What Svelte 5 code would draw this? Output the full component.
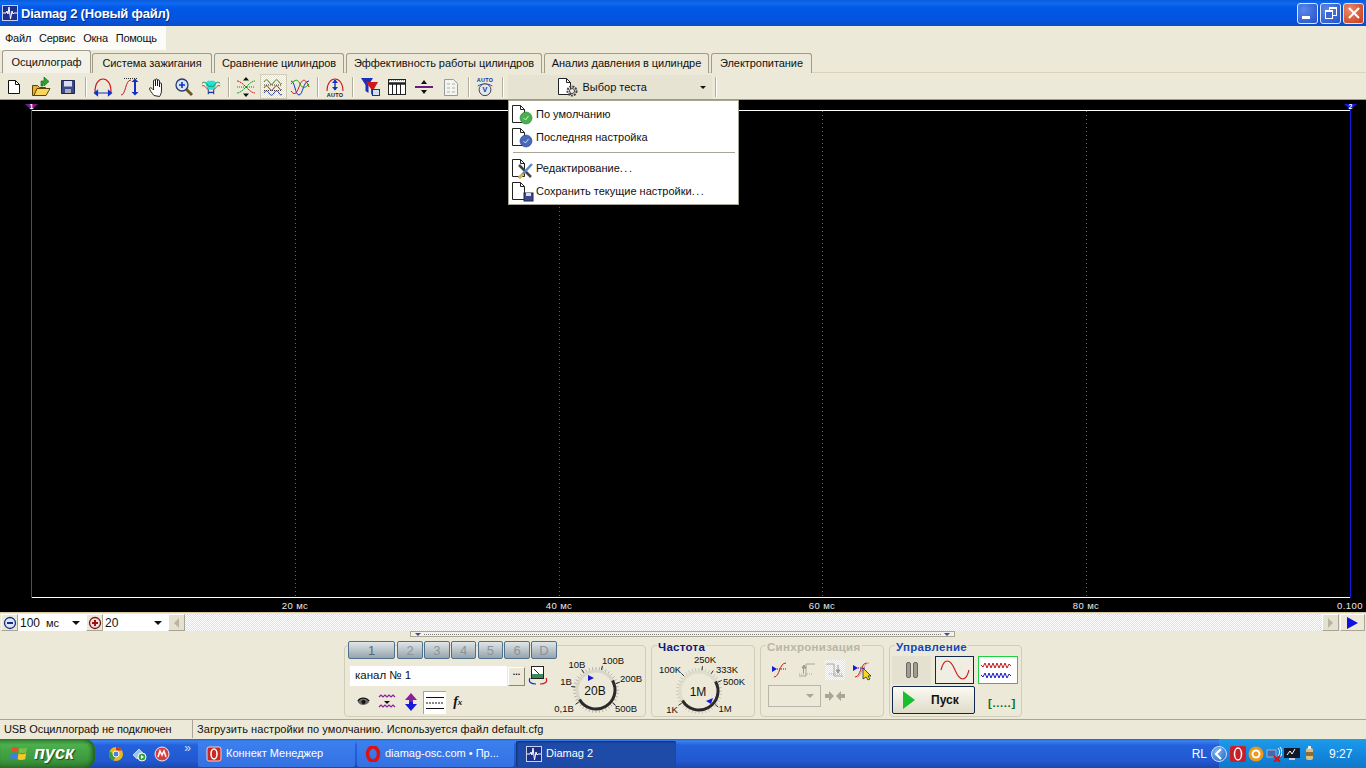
<script>
  const tabs = ['Осциллограф','Система зажигания','Сравнение цилиндров','Эффективность работы цилиндров','Анализ давления в цилиндре','Электропитание'];
  const menu = ['Файл','Сервис','Окна','Помощь'];
  const gridX = [294, 558, 821, 1085];
  const grid = [20,40,60,80];
  const chans = ['1','2','3','4','5','6','D'];
  function ticks(cx, cy, r1, r2, angles) {
    return angles.map((d) => {
      const a = d * Math.PI / 180;
      return { x1: cx + r1 * Math.cos(a), y1: cy + r1 * Math.sin(a), x2: cx + r2 * Math.cos(a), y2: cy + r2 * Math.sin(a) };
    });
  }
  const ring = Array.from({ length: 40 }, (_, i) => i * 9);
  const t1 = ticks(40, 46, 20, 23, ring);
  const t2 = ticks(49, 47, 20, 23, ring);
  const b1 = ticks(40, 46, 21, 25, [145, 188, 235, 285, 342, 38]);
  const b2 = ticks(49, 47, 21, 25, [145, 225, 278, 305, 335, 40]);
</script>

{#snippet doc()}
  <path d="M.5 .5h8l4 4v13h-12z" fill="#fff" stroke="#222"/>
  <path d="M8.500 .5v4h4" fill="none" stroke="#222"/>
{/snippet}

<div class="win">
  <header class="title">
    <svg class="appicon" viewBox="0 0 16 16" width="16" height="16"><rect width="16" height="16" fill="#1c2f8c"/><rect x=".5" y=".5" width="15" height="15" fill="none" stroke="#c8d2f0"/><path d="M1 8h3l1-2 1 3 1-7 1.500 12 1.500-8 1 3 1-1h3" fill="none" stroke="#fff"/></svg>
    <span class="ttext">Diamag 2 (Новый файл)</span>
    <div class="wbtns">
      <span class="wb"><i class="min"></i></span>
      <span class="wb"><i class="r1"></i><i class="r2"></i></span>
      <span class="wb close"><svg viewBox="0 0 12 12" width="12" height="12"><path d="M1 1l10 10M11 1L1 11" stroke="#fff" stroke-width="2"/></svg></span>
    </div>
  </header>

  <nav class="menubar">{#each menu as m}<span>{m}</span>{/each}</nav>

  <div class="tabs">
    {#each tabs as t, i}<span class="tab" class:active={i === 0}>{t}</span>{/each}
  </div>

  <div class="toolbar">
    <span class="tb"><svg viewBox="0 0 20 20"><path d="M4.500 3.500h7l4 4v9h-11z" fill="#fff" stroke="#111"/><path d="M11.500 3.500v4h4" fill="none" stroke="#111"/></svg></span>
    <span class="tb"><svg viewBox="0 0 20 20"><path d="M1.500 8.500h5l2 2h6v8h-13z" fill="#e8b030" stroke="#5a4300"/><path d="M3 18.500l3-7h13l-4 7z" fill="#fbd65a" stroke="#5a4300"/><path d="M10 9V4h3V0l5 4.500-5 4.500V6h-1v3z" fill="#2fa32f" stroke="#136013" stroke-width=".6"/></svg></span>
    <span class="tb"><svg viewBox="0 0 20 20"><path d="M3.500 3.500h13v13h-13z" fill="#3c4a8c" stroke="#1c2450"/><rect x="6" y="4" width="8" height="5.500" fill="#d7dcef"/><rect x="7" y="12" width="6" height="4" fill="#aab"/></svg></span>
    <span class="sep"></span>
    <span class="tb"><svg viewBox="0 0 20 20"><path d="M2 15C2 6 6 2 10 2s8 4 8 13" fill="none" stroke="#d01818" stroke-width="1.200"/><path d="M3 16h14M1.500 16l3-2.500v5zM18.500 16l-3-2.500v5z" stroke="#1030c8" stroke-width="1.200" fill="#1030c8"/></svg></span>
    <span class="tb"><svg viewBox="0 0 20 20"><path d="M1 18c5 0 4-15 10-15" fill="none" stroke="#d01818"/><path d="M4 1.500h14" stroke="#333" stroke-dasharray="1 1"/><path d="M15 3v14" stroke="#1030c8" stroke-width="2"/><path d="M11.500 5L15 1.500 18.500 5zM11.500 15l3.500 3.500 3.500-3.500z" fill="#1030c8"/></svg></span>
    <span class="tb"><svg viewBox="0 0 20 20"><path d="M7 18.500C5 16 2.500 13 2.500 11.500c0-1 1.500-1 2.500 0l1.500 1.500V4c0-1.500 2-1.500 2 0v5-6c0-1.500 2-1.500 2 0v6-5c0-1.500 2-1.500 2 0v6-3c0-1.500 2-1.500 2 0v6c0 3-1 5-2 6.500z" fill="#fff" stroke="#111" stroke-width=".9"/></svg></span>
    <span class="tb"><svg viewBox="0 0 20 20"><path d="M12 12l6 6" stroke="#6b5a28" stroke-width="3"/><circle cx="8" cy="8" r="6" fill="#d6e4f4" stroke="#2a3a70" stroke-width="1.300"/><path d="M5 8h6M8 5v6" stroke="#1030c8" stroke-width="1.600"/></svg></span>
    <span class="tb"><svg viewBox="0 0 22 20"><path d="M5 5l3-2h6l3 2-2 8h-8z" fill="#26e0d8"/><path d="M1 6c3-3 5 0 7 3 1 1 2 0 3 0s2 1 3 0c2-3 4-6 7-3" fill="none" stroke="#17804a"/><path d="M1 9c3-2 4 2 7 4M21 9c-3-2-4 2-7 4" fill="none" stroke="#c82020"/><path d="M8 13v5M14 13v5" stroke="#222"/><path d="M8 16h6" stroke="#1030c8" stroke-width="1.500"/></svg></span>
    <span class="sep"></span>
    <span class="tb"><svg viewBox="0 0 20 20"><path d="M1 4c6 0 12 12 18 12" fill="none" stroke="#d01818" stroke-dasharray="2 .6"/><path d="M1 16C7 16 13 4 19 4" fill="none" stroke="#18a018" stroke-dasharray="2 .6"/><path d="M1 10h18" stroke="#555" stroke-dasharray="1 1"/><path d="M7 3.500L10 0l3 3.500zM7 16.500l3 3.500 3-3.500z" fill="#111"/></svg></span>
    <span class="tb pressed"><svg viewBox="0 0 20 20"><path d="M1 5c2-3 3-3 5 0s3 3 5 0 3-3 5 0 2 2 3 1" fill="none" stroke="#18a018"/><path d="M1 11c2-3 3-3 5 0s3 3 5 0 3-3 5 0 2 2 3 1" fill="none" stroke="#d01818"/><path d="M1 16c2-3 3-3 5 0s3 3 5 0 3-3 5 0 2 2 3 1" fill="none" stroke="#1030c8"/><path d="M1 8h18M1 13.500h18" stroke="#333" stroke-dasharray="1 1"/></svg></span>
    <span class="tb"><svg viewBox="0 0 20 20"><path d="M1 4c4 0 4 14 8 14s4-14 10-14" fill="none" stroke="#1030c8"/><path d="M1 14c3 4 5 4 8-4s6-10 10 0" fill="none" stroke="#d01818"/><path d="M1 7c4-5 7-5 9 0s6 4 9 0" fill="none" stroke="#18a018"/></svg></span>
    <span class="sep"></span>
    <span class="tb"><svg viewBox="0 0 20 20"><path d="M2 14C2 6 6 2 10 2s8 4 8 12" fill="none" stroke="#d01818" stroke-width="1.100"/><path d="M10 3v10" stroke="#1030c8" stroke-width="1.400"/><path d="M7 6l3-3.500L13 6zM7 10l3 3.500 3-3.500z" fill="#1030c8"/><text x="10" y="19.500" class="auto">AUTO</text></svg></span>
    <span class="sep"></span>
    <span class="tb"><svg viewBox="0 0 20 20"><path d="M1 1h12L8.500 8v8L5.500 14V8z" fill="#1830c0"/><path d="M6 5h12l-4 7v7l-3-2v-5z" fill="#d01818"/><rect x="12.500" y="12.500" width="7" height="6" fill="#cfe0f2" stroke="#1c2f8c"/></svg></span>
    <span class="tb"><svg viewBox="0 0 20 20"><rect x="1.500" y="2.500" width="17" height="15" fill="#fff" stroke="#222"/><path d="M1.500 6.500h17" stroke="#222" stroke-width="2.500"/><path d="M5.500 6v11M9.500 6v11M13.500 6v11" stroke="#222"/><path d="M2 3.500h16" stroke="#999" stroke-dasharray="1 1"/></svg></span>
    <span class="tb"><svg viewBox="0 0 20 20"><path d="M1 10h18" stroke="#6a1a80" stroke-width="2"/><path d="M7 7l3-4 3 4zM7 13l3 4 3-4z" fill="#111"/></svg></span>
    <span class="tb"><svg viewBox="0 0 20 20"><path d="M3.500 2.500h9l4 4v12h-13z" fill="#f4f4f0" stroke="#999"/><path d="M6 7h3M6 11h3M6 15h3M11 7h3M11 11h3M11 15h3" stroke="#b0b0a8"/></svg></span>
    <span class="sep nar"></span>
    <span class="tb"><svg viewBox="0 0 20 22"><text x="10" y="6" class="auto2">AUTO</text><path d="M2 10c4-3 12-3 16 0" fill="none" stroke="#1030c8"/><circle cx="10" cy="14" r="6.500" fill="#e4e6ee" stroke="#334"/><text x="10" y="17" class="vtxt">V</text></svg></span>
    <span class="sep wid"></span>
    <div class="testbtn">
      <svg viewBox="0 0 24 20" width="24" height="20"><path d="M1.500 1.500h8l4 4v12h-12z" fill="#fff" stroke="#222"/><path d="M9.500 1.500v4h4" fill="none" stroke="#222"/><circle cx="15" cy="14" r="4.500" fill="none" stroke="#444" stroke-width="2" stroke-dasharray="2 1"/><circle cx="15" cy="14" r="2.500" fill="#eee" stroke="#444"/></svg>
      <span class="testlabel">Выбор теста</span>
      <i class="caret"></i>
    </div>
    <span class="sep"></span>
  </div>

  <main class="scope">
    <svg class="plot" viewBox="0 0 1364 512" width="1364" height="512">
      {#each gridX as x}
        <line x1={x + .5} x2={x + .5} y1="11" y2="497" stroke="#666" stroke-dasharray="1 3"/>
      {/each}
      <line x1="30" x2="1349" y1="10.500" y2="10.500" stroke="#fff"/>
      <line x1="30" x2="1349" y1="497.500" y2="497.500" stroke="#fff"/>
      <line x1="30.500" x2="30.500" y1="6" y2="498" stroke="#8a1fa0"/>
      <line x1="1349.500" x2="1349.500" y1="6" y2="498" stroke="#1818d8"/>
      <path d="M24 4h13l-6.500 6z" fill="#7a1c90"/>
      <path d="M1343 4h13l-6.500 6z" fill="#1818d8"/>
      <text x="30.500" y="9" class="mk">1</text>
      <text x="1349.500" y="9" class="mk">2</text>
      {#each grid as g, i}
        <text x={gridX[i]} y="509" class="axis">{g} мс</text>
      {/each}
      <text x="1349" y="509" class="axis">0.100</text>
    </svg>
  </main>

  <div class="scrollrow">
    <span class="rb"><svg viewBox="0 0 14 14" width="14" height="14"><circle cx="7" cy="7" r="5.500" fill="#dfe6f5" stroke="#1c2f8c" stroke-width="1.300"/><path d="M4 7h6" stroke="#1c2f8c" stroke-width="2"/></svg></span>
    <span class="sel s1"><span class="val">100<em>мс</em></span><i class="caret"></i></span>
    <span class="rb"><svg viewBox="0 0 14 14" width="14" height="14"><circle cx="7" cy="7" r="5.500" fill="#f5dfdf" stroke="#7a1414" stroke-width="1.300"/><path d="M4 7h6M7 4v6" stroke="#a01010" stroke-width="2"/></svg></span>
    <span class="sel s2"><span class="val">20</span><i class="caret"></i></span>
    <span class="rb sb"><i class="tri-l"></i></span>
    <span class="track"></span>
    <span class="rb sb"><i class="tri-r"></i></span>
    <span class="rb play"><i class="tri-p"></i></span>
  </div>

  <section class="lower">
    <div class="ruler"><i class="rm"></i><span class="dots"></span><i class="rm"></i></div>
    <div class="panels">
      <div class="group chan">
        <div class="cbtns">
          {#each chans as c, i}<span class="cb" class:first={i === 0}>{c}</span>{/each}
        </div>
        <div class="cmain">
          <div class="cleft">
            <div class="namerow">
              <span class="namefield">канал № 1</span>
              <span class="dotsbtn">...</span>
              <svg class="mini" viewBox="0 0 20 20" width="20" height="20"><rect x="3.500" y=".5" width="12" height="12" fill="#fff" stroke="#222"/><rect x="4" y="8" width="11" height="4" fill="#3a8a5a"/><path d="M6 3l5 5" stroke="#333"/><path d="M2 12c-2 4 1 6 6 6" fill="none" stroke="#1030c8" stroke-width="1.200"/><path d="M18 12c2 4-1 6-6 6" fill="none" stroke="#d01818" stroke-width="1.200"/></svg>
            </div>
            <div class="ctools">
              <span class="ct"><svg viewBox="0 0 16 12" width="13" height="10"><path d="M1 6c3-5 10-5 14 0-4 5-11 5-14 0z" fill="#666"/><circle cx="8" cy="6" r="2.500" fill="#111"/><path d="M1 5c3-5 10-5 14 0" fill="none" stroke="#111" stroke-width="1.400"/></svg></span>
              <span class="ct"><svg viewBox="0 0 18 18" width="18" height="18"><path d="M1 4l2-2 2 2 2-2 2 2 2-2 2 2 2-2 2 2" fill="none" stroke="#8a1fa0" stroke-width="1.200"/><path d="M6 8h6l-3 3z" fill="#111"/><path d="M1 14l2-2 2 2 2-2 2 2 2-2 2 2 2-2 2 2" fill="none" stroke="#8a1fa0" stroke-width="1.200"/></svg></span>
              <span class="ct"><svg viewBox="0 0 16 18" width="16" height="18"><path d="M8 0l6 7H10v2H6V7H2z" fill="#8a1fa0"/><path d="M8 18l-6-7h4V9h4v2h4z" fill="#1818d8"/></svg></span>
              <span class="ct sel2"><svg viewBox="0 0 18 14" width="18" height="14"><path d="M0 1.500h18M0 12.500h18" stroke="#111"/><path d="M0 7h18" stroke="#111" stroke-dasharray="2 1"/></svg></span>
              <span class="ct fx">f<sub>x</sub></span>
            </div>
          </div>
          <svg class="knob" viewBox="0 0 80 72" width="80" height="72">
            {#each t1 as t}<line {...t} stroke="#b4b2a4" stroke-width="1"/>{/each}
            {#each b1 as t}<line {...t} stroke="#222"/>{/each}
            <circle cx="40" cy="46" r="19" fill="none" stroke="#d8d6c8" stroke-width="3"/>
            <path d="M23.500 55.500A19 19 0 0 0 56.500 36.500" fill="none" stroke="#2a2a2a" stroke-width="3"/>
            <path d="M32 31l6 3-6 3z" fill="#1818d8"/>
            <text x="39" y="51" class="kval">20В</text>
            <text x="21" y="23.500" class="kl">10В</text><text x="57" y="19.500" class="kl">100В</text>
            <text x="10" y="40.500" class="kl">1В</text><text x="75" y="37.500" class="kl">200В</text>
            <text x="8" y="67.500" class="kl">0,1В</text><text x="70" y="67.500" class="kl">500В</text>
          </svg>
        </div>
      </div>

      <div class="group freq">
        <h4 class="navy">Частота</h4>
        <svg class="knob" viewBox="0 0 104 72" width="104" height="72">
          {#each t2 as t}<line {...t} stroke="#c4c2b0" stroke-width="1"/>{/each}
          {#each b2 as t}<line {...t} stroke="#333"/>{/each}
          <circle cx="49" cy="47" r="19" fill="none" stroke="#dedccc" stroke-width="3"/>
          <path d="M32.500 56.500A19 19 0 0 0 65.500 37.500" fill="none" stroke="#2a2a2a" stroke-width="3"/>
          <path d="M56 57l7-3-2 6z" fill="#1818d8"/>
          <text x="48" y="52" class="kval">1M</text>
          <text x="20" y="28.500" class="kl">100K</text><text x="55" y="18.500" class="kl">250K</text>
          <text x="77" y="28.500" class="kl">333K</text><text x="84" y="40.500" class="kl">500K</text>
          <text x="22" y="68.500" class="kl">1K</text><text x="75" y="67.500" class="kl">1M</text>
        </svg>
      </div>

      <div class="group sync">
        <h4 class="grey">Синхронизация</h4>
        <div class="syncicons">
          <svg viewBox="0 0 20 20" width="20" height="20"><path d="M3 17c6 0 5-14 12-14" fill="none" stroke="#d01818"/><path d="M1 6l5 3-5 3z" fill="#1818d8"/><path d="M6 9h9" stroke="#1818d8" stroke-dasharray="1 1"/></svg>
          <svg viewBox="0 0 20 20" width="20" height="20"><path d="M1 16h7V4h9" fill="none" stroke="#aaa898"/><path d="M1 14h14" stroke="#aaa898" stroke-dasharray="1 1"/><path d="M4 8l2-3 2 3zM5.500 8v5" fill="#999" stroke="#999"/></svg>
          <svg class="hatch" viewBox="0 0 20 20" width="20" height="20"><path d="M1 4h8v12h9" fill="none" stroke="#aaa898"/><path d="M4 14h14" stroke="#aaa898" stroke-dasharray="1 1"/><path d="M13 5v5M11 10l2 3 2-3z" fill="#999" stroke="#999"/></svg>
          <svg viewBox="0 0 20 22" width="20" height="22"><path d="M3 18c6 0 5-14 12-14" fill="none" stroke="#d01818"/><path d="M5 18c5 0 5-14 12-14" fill="none" stroke="#e09090"/><path d="M1 6l5 3-5 3z" fill="#1818d8"/><path d="M6 9h7" stroke="#1818d8" stroke-dasharray="1 1"/><path d="M11 9v11l3-2 2 3 2-1-2-3h3z" fill="#f8d820" stroke="#111" stroke-width=".7"/></svg>
        </div>
        <div class="syncrow">
          <span class="dis"><i class="caret g"></i></span>
          <svg viewBox="0 0 20 10" width="20" height="10"><path d="M0 3h4V0l5 5-5 5V7H0zM20 3h-4V0l-5 5 5 5V7h4z" fill="#a8a698"/></svg>
        </div>
      </div>

      <div class="group ctrl">
        <h4 class="blue">Управление</h4>
        <div class="ctop">
          <span class="cbox pause"><i></i><i></i></span>
          <span class="cbox sine"><svg viewBox="0 0 30 20" width="30" height="20"><path d="M1 10C4 -2 10 -2 15 10s11 12 14 0" fill="none" stroke="#d01818" stroke-width="1.100"/></svg></span>
          <span class="cbox wave"><svg viewBox="0 0 34 22" width="34" height="22"><path d="M0 6l2 2 2-4 2 5 2-5 2 5 2-5 2 5 2-5 2 5 2-5 2 5 2-5 2 5 2-4 2 2" fill="none" stroke="#c01818"/><path d="M0 16l2 2 2-4 2 5 2-5 2 5 2-5 2 5 2-5 2 5 2-5 2 5 2-5 2 5 2-4 2 2" fill="none" stroke="#1818c8"/></svg></span>
        </div>
        <div class="cbot">
          <span class="start"><svg viewBox="0 0 12 18" width="12" height="18"><path d="M0 0l12 9L0 18z" fill="#18c030"/></svg><b>Пуск</b></span>
          <span class="state">[.....]</span>
        </div>
      </div>
    </div>
  </section>

  <footer class="status">
    <span class="s1p">USB Осциллограф не подключен</span>
    <span class="s2p">Загрузить настройки по умолчанию. Используется файл default.cfg</span>
  </footer>

  <div class="taskbar">
    <span class="startb">
      <svg viewBox="0 0 20 20" width="19" height="19"><path d="M2 4c2-1 4-1 7 0l-1 5c-3-1-5-1-7 0z" fill="#e8502a"/><path d="M10 4c2 1 5 1 8 0l-1 5c-3 1-6 1-8 0z" fill="#7ac142"/><path d="M1 10c2-1 4-1 7 0l-1 6c-3-1-5-1-7 0z" fill="#3a80e0"/><path d="M9 10c2 1 5 1 8 0l-1 6c-3 1-6 1-8 0z" fill="#f8c828"/></svg>
      <b>пуск</b>
    </span>
    <span class="ql">
      <svg viewBox="0 0 16 16" width="16" height="16"><circle cx="8" cy="8" r="7" fill="#e8b820"/><path d="M8 1a7 7 0 0 1 6 3.500H8z" fill="#d83020"/><path d="M1.500 5a7 7 0 0 0 4 9.500L8 10z" fill="#38a038"/><circle cx="8" cy="8" r="3" fill="#4a80e0" stroke="#fff"/></svg>
      <svg viewBox="0 0 16 16" width="16" height="16"><path d="M2 9l6-6 4 4-6 6z" fill="#9cc4ee" stroke="#fff" stroke-width=".6"/><circle cx="11" cy="11" r="4" fill="#30a040" stroke="#fff"/><path d="M10 9l3 2-3 2z" fill="#fff"/></svg>
      <svg viewBox="0 0 16 16" width="16" height="16"><circle cx="8" cy="8" r="7" fill="#d84040" stroke="#eee"/><path d="M4 11l2-6 2 4 2-4 2 6" fill="none" stroke="#fff" stroke-width="1.500"/></svg>
      <span class="more">»</span>
    </span>
    <span class="task t1"><svg viewBox="0 0 16 16" width="16" height="16"><rect x="1" y="1" width="14" height="14" rx="2" fill="#c82828" stroke="#f8d0c0"/><ellipse cx="8" cy="8" rx="3" ry="5" fill="none" stroke="#fff" stroke-width="1.500"/></svg>Коннект Менеджер</span>
    <span class="task t2"><svg viewBox="0 0 16 16" width="16" height="16"><ellipse cx="8" cy="8" rx="5.500" ry="7" fill="none" stroke="#e01010" stroke-width="3.500"/></svg>diamag-osc.com • Пр...</span>
    <span class="task t3 on"><svg viewBox="0 0 16 16" width="16" height="16"><rect width="16" height="16" fill="#1c2f8c"/><rect x=".5" y=".5" width="15" height="15" fill="none" stroke="#c8d2f0"/><path d="M1 8h3l1-2 1 3 1-7 1.500 12 1.500-8 1 3 1-1h3" fill="none" stroke="#fff"/></svg>Diamag 2</span>
    <span class="spacer"></span>
    <span class="lang">RL</span>
    <span class="tray">
      <span class="chev"><svg viewBox="0 0 10 12" width="10" height="12"><path d="M7 1L2 6l5 5" fill="none" stroke="#fff" stroke-width="2.200"/></svg></span>
      <svg viewBox="0 0 16 16" width="16" height="16"><rect width="16" height="16" rx="2" fill="#c8202a"/><ellipse cx="8" cy="8" rx="3.500" ry="6" fill="none" stroke="#fff" stroke-width="1.500"/></svg>
      <svg viewBox="0 0 16 16" width="16" height="16"><circle cx="8" cy="8" r="7.500" fill="#f09818"/><circle cx="8" cy="8" r="3.500" fill="none" stroke="#fff" stroke-width="2"/></svg>
      <svg viewBox="0 0 16 16" width="16" height="16"><rect x="1" y="4" width="9" height="7" fill="#4868a8" stroke="#ddd" stroke-width=".6"/><path d="M12 2c2 2 2 6 0 8M14 1c2.500 3 2.500 8 0 10" fill="none" stroke="#fff"/><path d="M8 10l6 6M14 10l-6 6" stroke="#e01010" stroke-width="2"/></svg>
      <svg viewBox="0 0 16 16" width="16" height="16"><rect x="0" y="2" width="16" height="10" fill="#101828"/><path d="M3 9l3-4 2 3 3-5" stroke="#fff" fill="none"/><rect x="5" y="12" width="6" height="2" fill="#ccc"/></svg>
      <svg viewBox="0 0 16 16" width="16" height="16"><rect x="4" y="2" width="7" height="12" rx="2" fill="#d8c080"/><rect x="4" y="6" width="7" height="4" fill="#8a7038"/><rect x="6" y="0" width="3" height="3" fill="#eee"/></svg>
      <span class="clock">9:27</span>
    </span>
  </div>

  <div class="dropdown">
    <div class="mi"><svg viewBox="0 0 24 20" width="24" height="20">{@render doc()}<circle cx="14" cy="13" r="6" fill="#48b050" stroke="#2a7a30" stroke-width=".6"/><path d="M11.500 13l2 2 3-4" fill="none" stroke="#c8f0c8"/></svg><span>По умолчанию</span></div>
    <div class="mi"><svg viewBox="0 0 24 20" width="24" height="20">{@render doc()}<circle cx="14" cy="13" r="6" fill="#4868b8" stroke="#283c80" stroke-width=".6"/><path d="M11.500 13l2 2 3-4" fill="none" stroke="#c8d8f8"/></svg><span>Последняя настройка</span></div>
    <hr />
    <div class="mi"><svg viewBox="0 0 24 20" width="24" height="20">{@render doc()}<path d="M7 6l12 12" stroke="#444" stroke-width="2.500"/><path d="M7 19L20 5" stroke="#6088c8" stroke-width="2.500"/><path d="M7 19l4-4" stroke="#d8b048" stroke-width="3"/></svg><span>Редактирование<em>...</em></span></div>
    <div class="mi"><svg viewBox="0 0 24 20" width="24" height="20">{@render doc()}<rect x="12" y="11" width="9" height="8" fill="#3c4a8c" stroke="#1c2450"/><rect x="14" y="11" width="5" height="3" fill="#d7dcef"/></svg><span>Сохранить текущие настройки<em>...</em></span></div>
  </div>
</div>

<style>
  :global(body) { margin: 0; background: #ece9d8; }
  .win {
    position: relative; width: 1366px; height: 768px; overflow: hidden;
    display: flex; flex-direction: column; background: #ece9d8;
    font: 11px/1 "Liberation Sans", Arial, sans-serif; color: #111;
  }
  .title {
    height: 26px; flex: none; box-sizing: border-box; padding: 0 2px 0 2px;
    display: flex; align-items: center; gap: 3px;
    background: linear-gradient(#0a5bd8 0, #0f6af2 3px, #0058e6 8px, #0354de 20px, #0a4cc8 26px);
  }
  .ttext { color: #fff; font: bold 13px "Liberation Sans", Arial, sans-serif; text-shadow: 1px 1px 0 #0a2a80; letter-spacing: -.2px; }
  .wbtns { margin-left: auto; display: flex; gap: 2px; }
  .wb {
    position: relative; width: 21px; height: 21px; box-sizing: border-box; border: 1px solid #dfe6f8; border-radius: 3px;
    background: radial-gradient(circle at 30% 30%, #5a88ea, #2450c8); display: flex; align-items: center; justify-content: center;
  }
  .wb.close { background: radial-gradient(circle at 30% 30%, #e88a6a, #c83a18); }
  .wb .min { position: absolute; left: 4px; bottom: 4px; width: 8px; height: 3px; background: #fff; }
  .wb .r1, .wb .r2 { position: absolute; border: 1px solid #fff; border-top-width: 2px; }
  .wb .r1 { right: 3px; top: 3px; width: 6px; height: 6px; }
  .wb .r2 { left: 4px; bottom: 4px; width: 6px; height: 6px; background: #3a68d8; }

  .menubar { height: 24px; flex: none; width: 166px; box-sizing: border-box; background: #fbfbf8; display: flex; align-items: center; padding-left: 5px; gap: 8px; letter-spacing: -.25px; }

  .tabs { height: 23px; flex: none; display: grid; grid-template-columns: 88px 120px 130px 196px 165px 101px; column-gap: 2px; align-items: end; padding-left: 2px; box-sizing: border-box; border-bottom: 1px solid #d8d4c0; }
  .tab {
    height: 20px; box-sizing: border-box; display: flex; align-items: center; justify-content: center;
    background: #ece9d8; border: 1px solid #a09c88; border-bottom: 0; border-radius: 3px 3px 0 0; white-space: nowrap; letter-spacing: -.05px;
  }
  .tab.active { height: 23px; margin-right: -1px; background: #f4f2e8; letter-spacing: -.1px; padding-top: 1px; }

  .toolbar { height: 27px; flex: none; display: flex; align-items: center; padding: 1px 0 0 .5px; box-sizing: border-box; border-bottom: 1px solid #9d9a88; }
  .tb { width: 27px; height: 25px; flex: none; display: flex; align-items: center; justify-content: center; }
  .tb svg { width: 20px; height: 20px; }
  .tb.pressed { background: repeating-conic-gradient(#fff 0 25%, #e4e1d0 0 50%) 0 0 / 2px 2px; box-sizing: border-box; border: 1px solid #cfccba; }
  .sep { width: 8px; height: 24px; flex: none; position: relative; }
  .sep.nar { width: 7px; } .sep.wid { width: 9px; }
  .sep::after { content: ""; position: absolute; left: 3px; top: 2px; bottom: 2px; width: 1px; background: #b0ad9a; box-shadow: 1px 0 #fff; }
  .auto { font: bold 5.500px "Liberation Sans", sans-serif; text-anchor: middle; fill: #222; letter-spacing: .3px; }
  .auto2 { font: bold 6px "Liberation Sans", sans-serif; text-anchor: middle; fill: #1030a0; letter-spacing: .3px; }
  .vtxt { font: bold 8px "Liberation Sans", sans-serif; text-anchor: middle; fill: #1c2f8c; }
  .testbtn { width: 204px; height: 24px; flex: none; position: relative; box-sizing: border-box; display: flex; align-items: center; padding-left: 49px; gap: 2px; background: #e6e3d2; }
  .testlabel { letter-spacing: 0; padding-top: 1px; }
  .caret { width: 0; height: 0; border: 4px solid transparent; border-top: 4px solid #111; border-bottom: 0; }
  .testbtn .caret { position: absolute; right: 6px; top: 11px; border-width: 3px 3px 0; }

  .scope { height: 512px; flex: none; background: #000; padding-left: 1px; }
  .plot { display: block; }
  .mk { font: bold 7px "Liberation Sans", sans-serif; fill: #fff; text-anchor: middle; }
  .axis { font: 9.500px "Liberation Sans", sans-serif; fill: #e8e8e8; text-anchor: middle; letter-spacing: .4px; }

  .scrollrow { height: 20px; flex: none; display: flex; align-items: stretch; box-sizing: border-box; padding: 1px; background: #ece9d8; border-top: 1px solid #d8c8a0; }
  .rb { width: 17px; flex: none; display: flex; align-items: center; justify-content: center; box-sizing: border-box; background: #ece9d8; border: 1px solid; border-color: #fff #a8a594 #a8a594 #fff; }
  .sel { display: flex; align-items: center; justify-content: space-between; box-sizing: border-box; padding: 0 6px 0 2px; background: #fff; font-size: 12px; flex: none; }
  .sel .val em { font-style: normal; font-size: 11px; margin-left: 6px; }
  .s1 { width: 68px; } .s2 { width: 65px; }
  .sb { background: #e4e1d0; }
  .tri-l, .tri-r, .tri-p { width: 0; height: 0; border: 5px solid transparent; }
  .tri-l { border-right: 5px solid #b8b5a4; border-left: 0; }
  .tri-r { border-left: 5px solid #b8b5a4; border-right: 0; }
  .tri-p { border: 6px solid transparent; border-left: 11px solid #1010e0; border-right: 0; }
  .play { width: 25px; margin-left: 1px; }
  .track { flex: 1; background: repeating-conic-gradient(#fff 0 25%, #e4e1d0 0 50%) 0 0 / 2px 2px; }

  .lower { height: 88px; flex: none; position: relative; box-sizing: border-box; padding: 9px 0 0 344px; border-bottom: 1px solid #a8a594; }
  .ruler { position: absolute; left: 410px; top: -1px; width: 545px; height: 6px; box-sizing: border-box; border: 1px solid #a8a594; background: #f4f2e8; display: flex; align-items: center; gap: 3px; padding: 0 4px; }
  .rm { width: 0; height: 0; border: 3px solid transparent; border-top: 3px solid #3a4aa0; border-bottom: 0; }
  .dots { flex: 1; border-top: 1px dotted #777; }
  .panels { display: flex; gap: 5px; align-items: flex-start; }
  .group { position: relative; height: 72px; margin-top: 4px; box-sizing: border-box; border: 1px solid #d0cdb8; border-radius: 4px; flex: none; }
  .group h4 { margin: -5px 0 0 5px; font: bold 11.500px/13px "Liberation Sans", sans-serif; background: #ece9d8; display: block; width: fit-content; padding: 0 1px; letter-spacing: .3px; }
  .navy { color: #101880; } .grey { color: #b8b6a8; } .blue { color: #1448b8; }

  .chan { width: 302px; }
  .cbtns { display: flex; gap: 1.300px; margin: -5px 0 0 3px; }
  .cb { width: 25.500px; height: 18px; box-sizing: border-box; display: flex; align-items: center; justify-content: center; font: 13px "Liberation Sans", sans-serif; color: #8e9498; border: 1px solid #51708c; border-radius: 2px; background: linear-gradient(#e0e6e8, #b8c2c8 55%, #96a4ac); }
  .cb.first { width: 47px; color: #5a6a70; margin-right: 1px; }
  .cmain { display: flex; }
  .cleft { width: 212px; flex: none; padding: 7px 0 0 5px; box-sizing: border-box; }
  .namerow { display: flex; align-items: center; }
  .namefield { width: 157px; height: 20px; flex: none; box-sizing: border-box; background: #fff; padding: 0 0 0 5px; display: flex; align-items: center; font-size: 11.500px; }
  .dotsbtn { width: 17px; height: 19px; flex: none; margin-left: 1px; box-sizing: border-box; background: #ece9d8; border: 1px solid; border-color: #fff #8a8776 #8a8776 #fff; font: bold 9px/9px "Liberation Sans"; text-align: center; }
  .mini { margin-left: 3px; flex: none; }
  .ctools { display: flex; align-items: center; margin-top: 4px; padding-left: 2px; height: 24px; }
  .ct { width: 23.500px; display: flex; justify-content: center; align-items: center; }
  .ct.sel2 { height: 23px; background: #fff; box-sizing: border-box; border-left: 1px solid #a8a594; border-top: 1px solid #a8a594; }
  .fx { font: italic bold 14px "Liberation Serif", serif; }
  .fx sub { font-size: 9px; vertical-align: baseline; }
  .knob { flex: none; overflow: visible; }
  .chan .knob { margin: -15px 0 0 -1px; }
  .kl { font: 9.500px "Liberation Sans", sans-serif; text-anchor: middle; fill: #111; }
  .kval { font: 12px "Liberation Sans", sans-serif; text-anchor: middle; fill: #111; }

  .freq { width: 104px; }
  .freq .knob { display: block; margin: -10px 0 0 -2px; }

  .sync { width: 124px; }
  .syncicons { display: flex; justify-content: space-between; padding: 5px 11px 0 10px; gap: 7px; align-items: center; height: 22px; }
  .hatch { background: repeating-conic-gradient(#fff 0 25%, #e4e1d0 0 50%) 0 0 / 2px 2px; }
  .syncrow { display: flex; align-items: center; gap: 4px; padding: 4px 0 0 7px; }
  .dis { width: 53px; height: 22px; box-sizing: border-box; border: 1px solid #b8b6a8; display: flex; align-items: center; justify-content: flex-end; padding-right: 6px; }
  .caret.g { border-top-color: #a8a698; }

  .ctrl { width: 133px; padding-left: 2px; }
  .ctrl h4 { margin-left: 3px; }
  .ctop { display: flex; gap: 4px; margin-top: 2px; }
  .cbox { width: 39px; height: 28px; box-sizing: border-box; display: flex; align-items: center; justify-content: center; }
  .pause { background: #e4e1d0; gap: 2px; }
  .pause i { width: 3px; height: 14px; background: #a09e94; border: 1px solid #6a6a60; border-radius: 2px; }
  .sine { border: 1px solid #10284c; background: #f0eee2; }
  .wave { border: 1px solid #20d040; background: #fff; width: 40px; }
  .cbot { display: flex; align-items: center; margin-top: 2px; }
  .start { width: 83px; height: 28px; box-sizing: border-box; border: 1px solid #10284c; border-radius: 2px; background: linear-gradient(#fbfaf2, #dedbc8); display: flex; align-items: center; padding-left: 10px; gap: 16px; }
  .start b { font-size: 12px; }
  .state { margin: 6px 0 0 13px; color: #107020; font: bold 11.500px "Liberation Sans", sans-serif; letter-spacing: .6px; }

  .status { height: 19px; flex: none; display: flex; align-items: center; font-size: 11px; box-sizing: border-box; padding-bottom: 1px; }
  .s1p { width: 192px; padding-left: 4px; box-sizing: border-box; letter-spacing: -.1px; }
  .s2p { padding-left: 4px; border-left: 1px solid #a8a594; height: 100%; display: flex; align-items: center; letter-spacing: .08px; }

  .taskbar { height: 29px; flex: none; display: flex; align-items: center; font-size: 11px; color: #fff; background: linear-gradient(#1f5fd0 0, #3c82f0 2px, #2462dc 6px, #2258d0 22px, #1a48b0 29px); }
  .startb { width: 95px; height: 29px; flex: none; box-sizing: border-box; border-radius: 0 10px 10px 0; background: linear-gradient(#3a8a3a, #4caf4c 20%, #3c9a3c 70%, #2f7a2f); display: flex; align-items: center; padding-left: 10px; gap: 5px; box-shadow: inset -3px 0 4px #1f5f1f; }
  .startb b { font: italic bold 18px "Liberation Sans", sans-serif; text-shadow: 1px 1px 1px #1a4a1a; letter-spacing: 0; }
  .ql { width: 103px; flex: none; box-sizing: border-box; padding-left: 13px; display: flex; align-items: center; gap: 7px; position: relative; }
  .more { position: absolute; right: 7px; top: -4px; font-size: 12px; color: #cfe0ff; }
  .task { width: 157px; height: 26px; flex: none; box-sizing: border-box; display: flex; align-items: center; gap: 4px; padding-left: 8px; margin-right: 2px; border-radius: 2px; background: linear-gradient(#3c80ee, #3878e8 50%, #3470e0); white-space: nowrap; }
  .task.on { width: 160px; padding-left: 10px; background: #1e4aa8; box-shadow: inset 1px 1px 2px #10306c; }
  .spacer { flex: 1; }
  .lang { margin-right: 12px; font-size: 12px; letter-spacing: 0; }
  .tray { width: 147px; height: 29px; flex: none; box-sizing: border-box; display: flex; align-items: center; gap: 2px; background: linear-gradient(#18a0e8 0, #1c98e8 2px, #1488e0 50%, #1078c8); }
  .chev { width: 16px; height: 16px; margin: 0 1px 0 -8px; box-sizing: border-box; flex: none; border-radius: 50%; background: radial-gradient(circle at 35% 30%, #80b8f0, #2060c8); border: 1px solid #d0e0ff; display: flex; align-items: center; justify-content: center; }
  .clock { margin-left: 9px; font-size: 12px; letter-spacing: 0; }

  .dropdown { position: absolute; left: 508px; top: 100px; width: 231px; height: 105px; box-sizing: border-box; background: #fff; border: 1px solid #a8a594; padding: 2px 1px; }
  .mi { height: 23px; display: flex; align-items: center; padding-left: 2px; }
  .mi em { font-style: normal; letter-spacing: 1.500px; }
  .dropdown hr { margin: 3px 2px 4px 3px; border: 0; border-top: 1px solid #a8a594; }
</style>
